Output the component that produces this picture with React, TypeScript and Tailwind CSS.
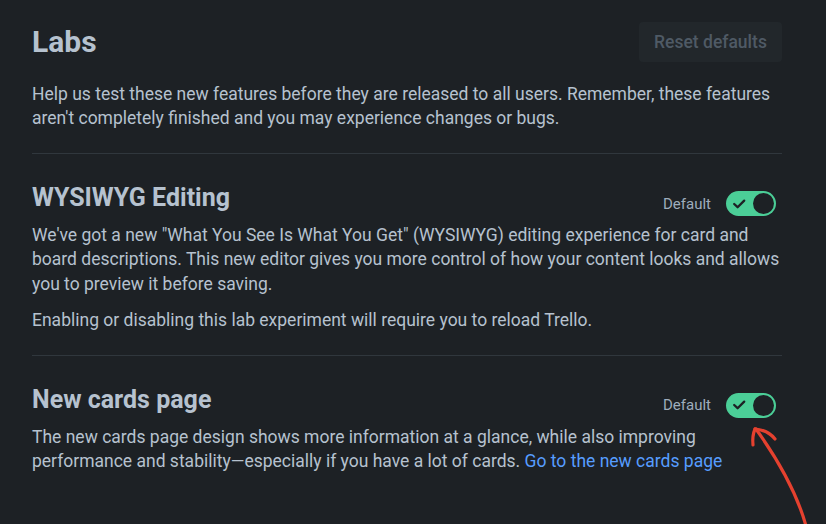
import React from "react";

function Toggle() {
  return (
    <div className="flex h-[25px] w-[50px] items-center justify-between rounded-full bg-[#4bce97] p-[2px]">
      <svg width="15" height="12" viewBox="0 0 15 12" className="ml-[4px]">
        <path d="M2.2 6 L5.6 9.2 L12.2 2.6" fill="none" stroke="#1d2125" strokeWidth="2.3" strokeLinecap="round" strokeLinejoin="round" />
      </svg>
      <div className="h-[21px] w-[21px] rounded-full bg-[#1d2125]" />
    </div>
  );
}

function LabSection({
  title,
  children,
}: {
  title: string;
  children: React.ReactNode;
}) {
  return (
    <section className="pt-[28px]">
      <div className="flex items-start justify-between">
        <h2 className="text-[25px] font-bold leading-[32px] text-[#b6c2cf]">{title}</h2>
        <div className="mr-[6px] mt-[9px] flex items-center gap-[15px]">
          <span className="text-[15px] leading-[20px] text-[#9fadbc]">Default</span>
          <Toggle />
        </div>
      </div>
      <div className="mt-[7px] flex flex-col gap-[12px] text-[17.5px] leading-[24.4px] text-[#b6c2cf]">
        {children}
      </div>
    </section>
  );
}

export default function App() {
  return (
    <div
      className="relative h-[524px] w-[826px] overflow-hidden bg-[#1d2125]"
      style={{ fontFamily: "Roboto, 'Liberation Sans', sans-serif" }}
    >
      <div className="ml-[32px] w-[750px] pt-[22px]">
        <div className="flex h-[40px] items-center justify-between">
          <h1 className="text-[30px] font-bold leading-[36px] text-[#b6c2cf]">Labs</h1>
          <button
            disabled
            className="h-[40px] w-[143px] rounded-[4px] bg-[#22272b] text-[17.5px] font-medium text-[#4f5a65]"
          >
            Reset defaults
          </button>
        </div>
        <p className="mt-[20px] text-[17.5px] leading-[24px] text-[#b6c2cf]">
          Help us test these new features before they are released to all users. Remember, these features
          aren't completely finished and you may experience changes or bugs.
        </p>
        <div className="mt-[23px] h-px bg-[#30373d]" />

        <LabSection title="WYSIWYG Editing">
          <p>
            We've got a new "What You See Is What You Get" (WYSIWYG) editing experience for card and
            board descriptions. This new editor gives you more control of how your content looks and allows
            you to preview it before saving.
          </p>
          <p>Enabling or disabling this lab experiment will require you to reload Trello.</p>
        </LabSection>
        <div className="mt-[22px] h-px bg-[#30373d]" />

        <LabSection title="New cards page">
          <p>
            The new cards page design shows more information at a glance, while also improving
            performance and stability—especially if you have a lot of cards.{" "}
            <a className="text-[#579dff]">Go to the new cards page</a>
          </p>
        </LabSection>
      </div>

      {/* hand-drawn annotation arrow pointing at the toggle */}
      <svg
        className="absolute left-[740px] top-[420px]"
        width="86"
        height="104"
        viewBox="0 0 86 104"
        fill="none"
        stroke="#e5412f"
        strokeWidth="3.2"
        strokeLinecap="round"
        strokeLinejoin="round"
      >
        <path d="M66 106 Q54 62 16 9" />
        <path d="M15 9 Q12 16 13 25" />
        <path d="M15 9 Q28 10 35 19" />
      </svg>
    </div>
  );
}
